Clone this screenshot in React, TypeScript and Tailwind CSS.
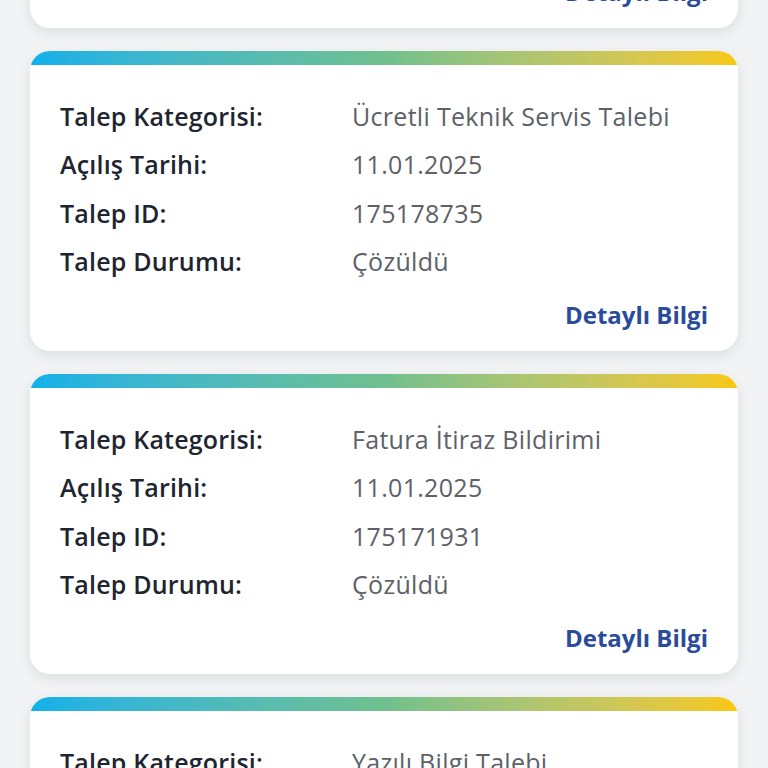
import React from "react";

type Talep = {
  kategori: string;
  tarih: string;
  id: string;
  durum: string;
};

const TALEPLER: Talep[] = [
  { kategori: "Arıza Kaydı Talebi", tarih: "12.01.2025", id: "175201146", durum: "Çözüldü" },
  { kategori: "Ücretli Teknik Servis Talebi", tarih: "11.01.2025", id: "175178735", durum: "Çözüldü" },
  { kategori: "Fatura İtiraz Bildirimi", tarih: "11.01.2025", id: "175171931", durum: "Çözüldü" },
  { kategori: "Yazılı Bilgi Talebi", tarih: "10.01.2025", id: "175102284", durum: "Çözüldü" },
];

function Row({ label, value }: { label: string; value: string }) {
  return (
    <div className="flex h-[48.5px] items-center">
      <span className="w-[292px] shrink-0 text-[25px] font-semibold tracking-[0.2px] text-[#1e2530]">{label}</span>
      <span className="text-[25px] tracking-[0.3px] text-[#5d6168]">{value}</span>
    </div>
  );
}

function TalepCard({ t }: { t: Talep }) {
  return (
    <div className="overflow-hidden rounded-[20px] bg-white shadow-[0_4px_14px_rgba(0,0,0,0.09)]">
      <div className="h-[14px] bg-gradient-to-r from-[#0fb0ea] via-[#6fc08e] to-[#f8c806]" />
      <div className="px-[30px] pt-[27px] pb-[22px]">
        <Row label="Talep Kategorisi:" value={t.kategori} />
        <Row label="Açılış Tarihi:" value={t.tarih} />
        <Row label="Talep ID:" value={t.id} />
        <Row label="Talep Durumu:" value={t.durum} />
        <div className="mt-[15px] flex h-[28px] items-center justify-end">
          <button className="text-[24px] font-bold text-[#2b4c9b]">Detaylı Bilgi</button>
        </div>
      </div>
    </div>
  );
}

export default function App() {
  return (
    <div
      className="h-[768px] overflow-hidden bg-[#f2f3f5]"
      style={{ fontFamily: "'Open Sans', 'Noto Sans', sans-serif" }}
    >
      <div className="-mt-[272px] flex flex-col gap-[23px] px-[30px]">
        {TALEPLER.map((t) => (
          <TalepCard key={t.id} t={t} />
        ))}
      </div>
    </div>
  );
}
